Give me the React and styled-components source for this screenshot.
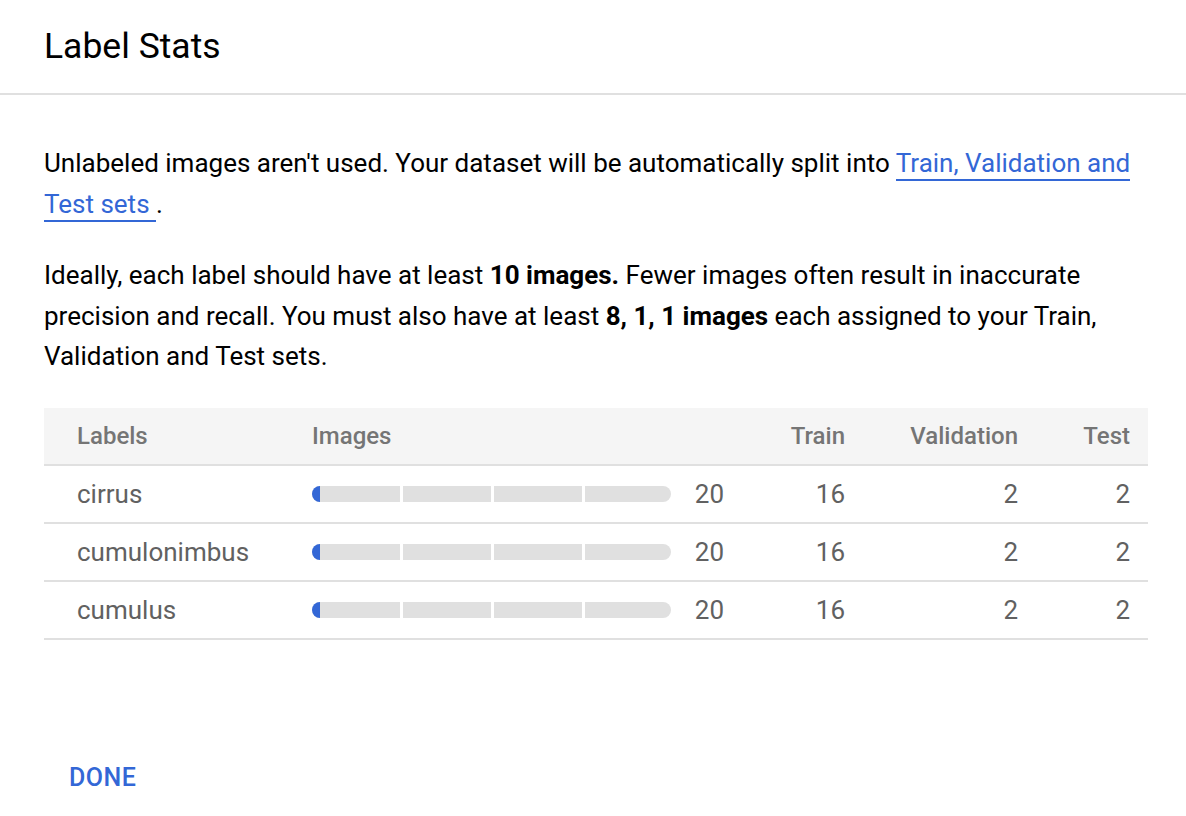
import React from "react";
import styled, { createGlobalStyle } from "styled-components";

const GlobalStyle = createGlobalStyle`
  body {
    margin: 0;
    background: #fff;
    font-family: Roboto, "Liberation Sans", Arial, sans-serif;
    color: #202124;
  }
`;

const Page = styled.div`
  width: 1186px;
  height: 816px;
  display: flex;
  flex-direction: column;
`;

const Header = styled.div`
  height: 95px;
  display: flex;
  align-items: center;
  padding-left: 44px;
  border-bottom: 2px solid #e0e0e0;
  box-sizing: border-box;
`;

const Title = styled.h1`
  margin: 0 0 2px;
  font-size: 35.5px;
  font-weight: 400;
  color: #000;
`;

const Body = styled.div`
  padding: 48px 38px 0 44px;
`;

const Para = styled.p`
  margin: 0 0 31px;
  font-size: 26px;
  line-height: 40.5px;
  color: #000;
`;

const Link = styled.a`
  color: #3367d6;
  text-decoration: none;
  border-bottom: 2px solid #3367d6;
  padding-bottom: 1px;
`;

const Table = styled.div`
  width: 1104px;
  margin-top: 31px;
`;

const Row = styled.div`
  display: grid;
  grid-template-columns: 268px 412px 121px 173px 112px;
  padding-right: 18px;
  height: 58px;
  align-items: center;
  border-bottom: 2px solid #e0e0e0;
  box-sizing: border-box;
  background: ${(p) => (p.$head ? "#f5f5f5" : "#fff")};
  color: ${(p) => (p.$head ? "#757575" : "#616161")};
  font-size: ${(p) => (p.$head ? "24px" : "26px")};
  font-weight: ${(p) => (p.$head ? 500 : 400)};
`;

const Cell = styled.div`
  text-align: ${(p) => (p.$right ? "right" : "left")};
  padding-left: ${(p) => (p.$first ? "33px" : "0")};
`;

const ImagesCell = styled.div`
  display: flex;
  align-items: center;
  justify-content: space-between;
`;

const Bar = styled.div`
  position: relative;
  width: 360px;
  height: 16px;
  border-radius: 8px;
  background: #e0e0e0;
  overflow: hidden;
`;

const Fill = styled.div`
  position: absolute;
  left: 0;
  top: 0;
  bottom: 0;
  background: #3367d6;
`;

const Divider = styled.div`
  position: absolute;
  top: 0;
  bottom: 0;
  width: 3px;
  background: #fff;
`;

const Count = styled.span`
  padding-left: 24px;
  margin-left: auto;
`;

const Footer = styled.div`
  margin-top: auto;
  padding: 0 0 14px 49px;
`;

const DoneButton = styled.button`
  background: none;
  border: none;
  font-family: inherit;
  font-size: 25px;
  font-weight: 500;
  letter-spacing: 0.5px;
  color: #3367d6;
  padding: 10px 20px;
  cursor: pointer;
`;

const rows = [
  { label: "cirrus", images: 20, train: 16, validation: 2, test: 2 },
  { label: "cumulonimbus", images: 20, train: 16, validation: 2, test: 2 },
  { label: "cumulus", images: 20, train: 16, validation: 2, test: 2 },
];

const ProgressBar = () => (
  <Bar>
    <Fill style={{ width: "8px" }} />
    <Divider style={{ left: "88px" }} />
    <Divider style={{ left: "179px" }} />
    <Divider style={{ left: "270px" }} />
  </Bar>
);

export default function App() {
  return (
    <Page>
      <GlobalStyle />
      <Header>
        <Title>Label Stats</Title>
      </Header>
      <Body>
        <Para>
          Unlabeled images aren't used. Your dataset will be automatically split into{" "}
          <Link href="#">Train, Validation and Test sets </Link> .
        </Para>
        <Para>
          Ideally, each label should have at least <b>10 images.</b> Fewer images often result in
          inaccurate precision and recall. You must also have at least <b>8, 1, 1 images</b> each
          assigned to your Train, Validation and Test sets.
        </Para>
        <Table>
          <Row $head>
            <Cell $first>Labels</Cell>
            <Cell>Images</Cell>
            <Cell $right>Train</Cell>
            <Cell $right>Validation</Cell>
            <Cell $right>Test</Cell>
          </Row>
          {rows.map((r) => (
            <Row key={r.label}>
              <Cell $first>{r.label}</Cell>
              <ImagesCell>
                <ProgressBar />
                <Count>{r.images}</Count>
              </ImagesCell>
              <Cell $right>{r.train}</Cell>
              <Cell $right>{r.validation}</Cell>
              <Cell $right>{r.test}</Cell>
            </Row>
          ))}
        </Table>
      </Body>
      <Footer>
        <DoneButton>DONE</DoneButton>
      </Footer>
    </Page>
  );
}
